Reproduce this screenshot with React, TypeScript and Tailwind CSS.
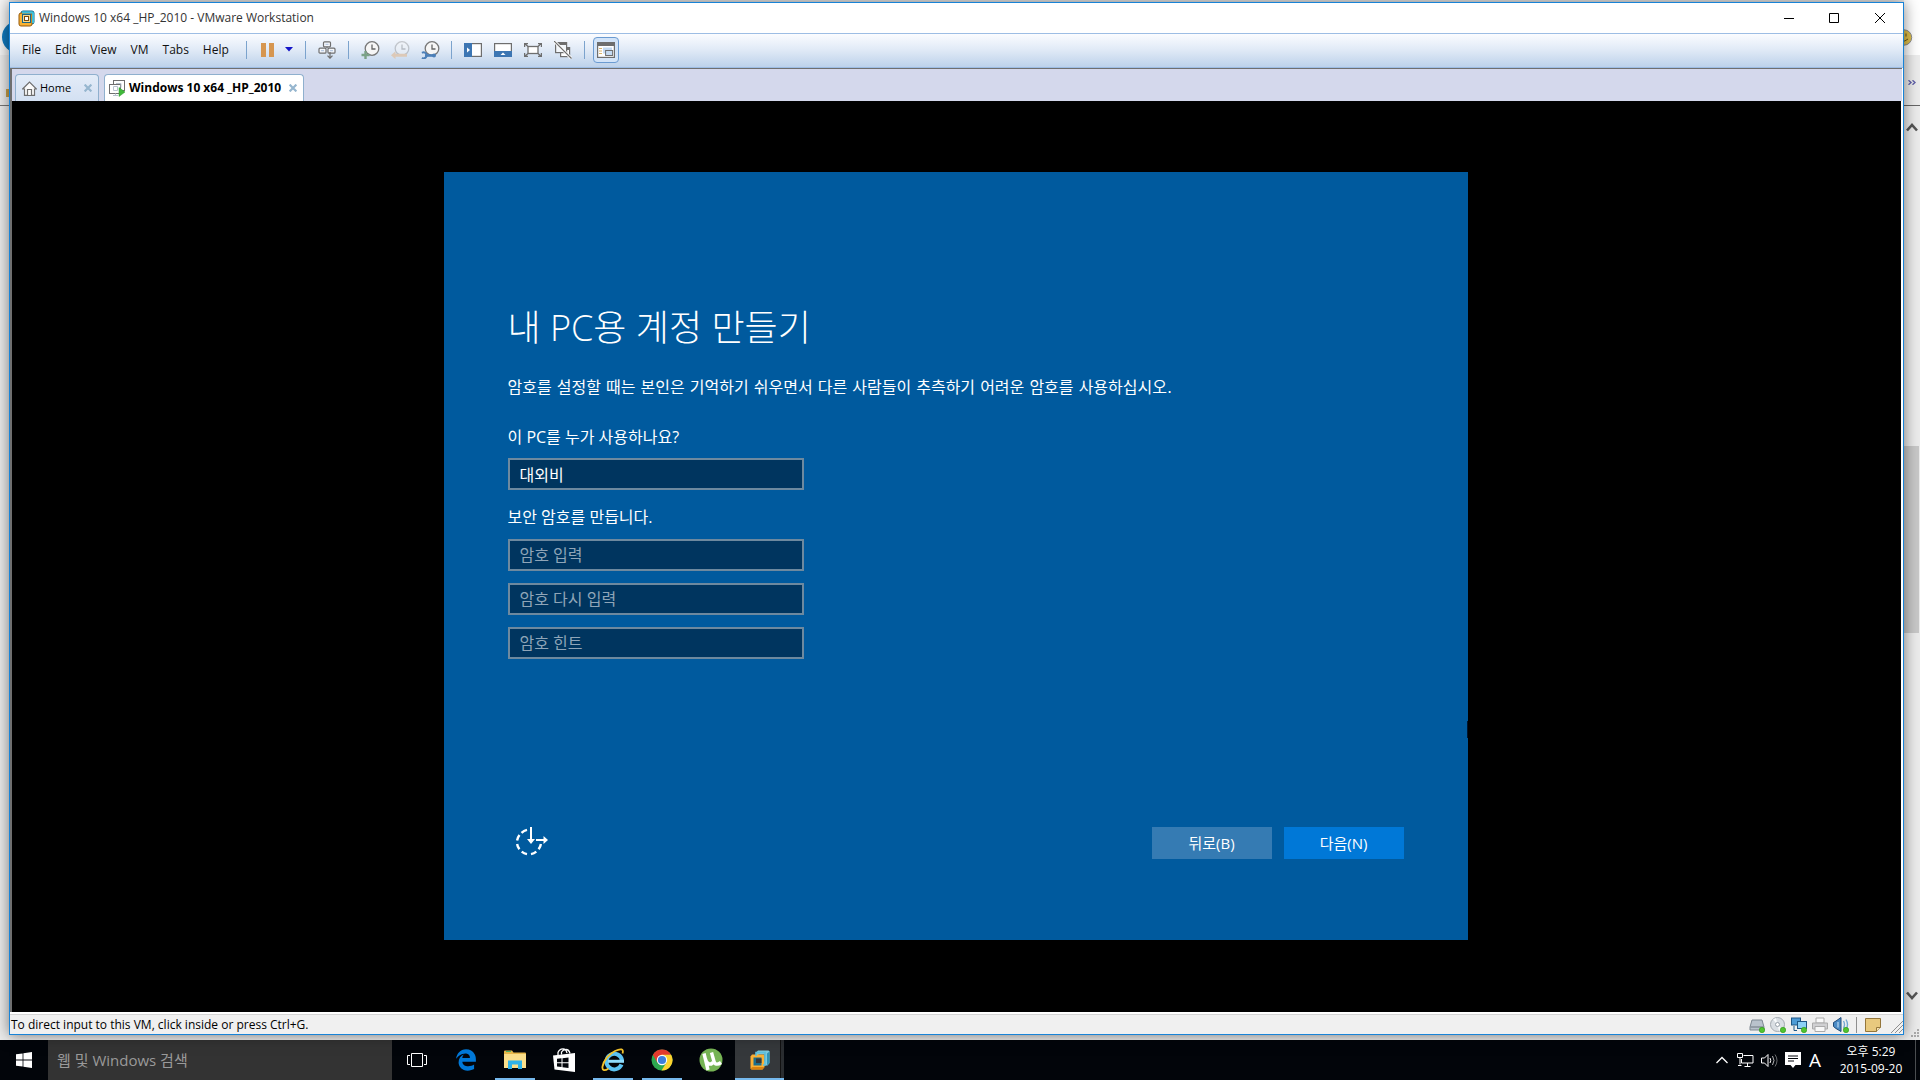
import type { ReactNode } from "react";
import { FaEdgeLegacy } from "react-icons/fa6";

const G = "#6e6e6e";

function VmLogo({ size }: { size: number }) {
  return (
    <svg width={size} height={size} viewBox="0 0 20 20" fill="none" aria-hidden="true">
      <path d="M6 2.500L8 .5h10.500l1 1V13l-2 2.500H6z" fill="#7cc9de" />
      <path d="M17 3.500l2.500-2V13l-2.500 2.500z" fill="#2f93b5" />
      <rect x="8.500" y="4.500" width="6.500" height="7" fill="#35383b" />
      <path d="M.5 6.500l1.500-2h11.500l1 1V17l-2 2.500H1.500l-1-1z" fill="#fbb034" />
      <path d="M.5 18.500l2-1.500h12l-2 2.500h-11z" fill="#d9820f" />
      <path d="M3.500 7.500h8v8h-8z" fill="#1c6f8d" />
      <path d="M6 8.500h5.500V13H6z" fill="#35383b" />
      <path d="M6 6V2.500h9V15h-2" stroke="#5cc0dc" strokeWidth="1.600" />
    </svg>
  );
}

function TitleLogo() {
  return (
    <svg width="17" height="17" viewBox="0 0 17 17" fill="none" aria-hidden="true">
      <rect x="3" y="1" width="13" height="13" rx="2" fill="#3fc0dc" stroke="#17678a" />
      <rect x="1" y="3" width="13" height="13" rx="2" fill="#f9b233" stroke="#96590a" />
      <path d="M4 2.5h9.5a1.5 1.5 0 0 1 1.5 1.5v9" stroke="#3fc0dc" strokeWidth="2" />
      <rect x="4.5" y="4.5" width="8" height="8" fill="#f9d88a" stroke="#17678a" />
      <rect x="6.5" y="6.5" width="4" height="4" fill="#fff" stroke="#7b4c10" />
    </svg>
  );
}

function Sep() {
  return <span className="h-[18px] w-px shrink-0 bg-[#7ba3cd]" />;
}

function Tool({ label, children }: { label: string; children: ReactNode }) {
  return (
    <button type="button" aria-label={label} className="flex h-6 w-[30px] shrink-0 items-center justify-center">
      {children}
    </button>
  );
}

function Clock({ faded }: { faded?: boolean }) {
  return (
    <g opacity={faded ? 0.35 : 1}>
      <circle cx="11" cy="7.5" r="6.8" fill="#f6f6f6" stroke="#777" strokeWidth="1.3" />
      <path d="M11 3.5V8h3.5" stroke="#666" strokeWidth="1.3" fill="none" />
    </g>
  );
}

function ToolBar() {
  return (
    <div className="flex h-[35px] shrink-0 items-center border-y border-[#9dbde4] bg-linear-to-b from-[#fbfcff] via-[#dfe9f6] to-[#bdd2ea] pb-0.5">
      <nav className="flex w-[232px] pl-[5px] text-[12px] leading-4 text-[#111]">
        {["File", "Edit", "View", "VM", "Tabs", "Help"].map((m) => (
          <button type="button" key={m} className="px-[7px]">
            {m}
          </button>
        ))}
      </nav>
      <span className="w-1" />
      <Sep />
      <button type="button" aria-label="Pause" className="ml-3.5 flex gap-[3px]">
        <span className="h-3.5 w-[5px] bg-[#d69650]" />
        <span className="h-3.5 w-[5px] bg-[#d69650]" />
      </button>
      <button type="button" aria-label="Power options" className="ml-[11px]">
        <svg width="8" height="5" viewBox="0 0 8 5">
          <path d="M0 0h8L4 4.6z" fill="#1414c8" />
        </svg>
      </button>
      <span className="w-3" />
      <Sep />
      <span className="w-1.5" />
      <Tool label="Send Ctrl+Alt+Del">
        <svg width="18" height="18" viewBox="0 0 18 18" fill="#f4f7fb" stroke={G} strokeWidth="1.2">
          <rect x="5.5" y=".8" width="7" height="5" rx="1" />
          <rect x="1" y="7.2" width="7" height="5" rx="1" />
          <rect x="10" y="7.2" width="7" height="5" rx="1" />
          <path d="M9 5.8v1.4M12 11v6M9.5 14.6l2.5 2.6 2.5-2.6" fill="none" />
          <path d="M7.5 3.3h3M3 9.7h3M12 9.7h3" stroke="#b9c9e2" />
        </svg>
      </Tool>
      <span className="w-1.5" />
      <Sep />
      <span className="w-1.5" />
      <Tool label="Take snapshot">
        <svg width="19" height="18" viewBox="0 0 19 18">
          <Clock />
          <path d="M4.5 10v8M.5 14h8" stroke="#7ba287" strokeWidth="2.4" />
        </svg>
      </Tool>
      <Tool label="Revert snapshot">
        <svg width="19" height="18" viewBox="0 0 19 18">
          <Clock faded />
          <path d="M0 14.200L4.500 10.200v2.600H16v3H4.500v2.400z" fill="#dcc9b8" />
        </svg>
      </Tool>
      <Tool label="Manage snapshots">
        <svg width="19" height="18" viewBox="0 0 19 18">
          <Clock />
          <path d="M4 14.500h9" stroke="#4b7fb8" strokeWidth="2.600" />
          <path d="M1 11.800a3 3 0 1 1 0 5" stroke="#4b7fb8" strokeWidth="2" fill="none" />
          <circle cx="13" cy="14.500" r="2" fill="#4b7fb8" />
        </svg>
      </Tool>
      <span className="w-1.5" />
      <Sep />
      <span className="w-1.5" />
      <Tool label="Show library">
        <svg width="18" height="14" viewBox="0 0 18 14">
          <rect x=".6" y=".6" width="16.800" height="12.800" fill="#fff" stroke={G} strokeWidth="1.200" />
          <rect width="8" height="14" fill="#3d76b3" />
          <path d="M3 4.500L6 7 3 9.500z" fill="#fff" />
        </svg>
      </Tool>
      <Tool label="Show thumbnail bar">
        <svg width="18" height="14" viewBox="0 0 18 14">
          <rect x=".6" y=".6" width="16.800" height="12.800" fill="#fff" stroke={G} strokeWidth="1.200" />
          <rect y="8" width="18" height="6" fill="#3d76b3" />
          <path d="M6.500 12L9 9.600 11.500 12z" fill="#fff" />
        </svg>
      </Tool>
      <Tool label="Full screen">
        <svg width="18" height="14" viewBox="0 0 18 14" fill="none" stroke={G} strokeWidth="1.300">
          <rect x="4" y="3.500" width="10" height="7" fill="#fff" />
          <path d="M.6 4V.6H4M14 .6h3.400V4M17.400 10v3.400H14M4 13.400H.6V10M.6.6l3.400 3M17.400.6l-3.400 3M.6 13.400l3.400-3M17.400 13.400l-3.400-3" />
        </svg>
      </Tool>
      <Tool label="Unity">
        <svg width="18" height="18" viewBox="0 0 18 18" fill="none">
          <rect x="6.600" y="6.600" width="9" height="9" fill="#fff" stroke={G} strokeWidth="1.200" />
          <path d="M6 6h10v3H6z" fill={G} />
          <rect x="1.600" y="1.600" width="11" height="10" fill="#f3f7fb" stroke={G} strokeWidth="1.200" />
          <path d="M1 1h12v3H1z" fill={G} />
          <path d="M0 0l17.500 17.500" stroke="#fff" strokeWidth="3" />
          <path d="M0 0l17.500 17.500" stroke={G} strokeWidth="1.200" />
        </svg>
      </Tool>
      <span className="w-1.5" />
      <Sep />
      <button
        type="button"
        aria-label="Console view"
        className="ml-2 flex h-[26px] w-[26px] items-center justify-center rounded-sm border border-[#6b9bd1] bg-[#d3e4f8]"
      >
        <svg width="18" height="16" viewBox="0 0 18 16">
          <rect x=".6" y=".6" width="16.800" height="14.800" fill="#fff" stroke={G} strokeWidth="1.200" />
          <path d="M0 0h18v4H0z" fill={G} />
          <path d="M2 6.500h3M2 9h3M2 11.500h3" stroke="#d9b36a" />
          <path d="M6 5.500h9v6H6z" fill="#c4daf2" />
          <rect x="8.600" y="8.500" width="7" height="5" fill="#c4daf2" stroke={G} />
        </svg>
      </button>
    </div>
  );
}

function TabClose({ label }: { label: string }) {
  return (
    <button type="button" aria-label={label} className="ml-auto">
      <svg width="8" height="8" viewBox="0 0 8 8" stroke="#96b6cf" strokeWidth="2.200">
        <path d="M.6.6l6.800 6.800M7.400.6L.6 7.400" />
      </svg>
    </button>
  );
}

function TabStrip() {
  return (
    <div className="flex h-8 shrink-0 items-end gap-[5px] bg-[#d4d8ec] pl-[3px] text-black">
      <div className="flex h-[27px] w-[84px] items-center rounded-t-sm border border-b-0 border-[#8fb0ce] bg-linear-to-b from-[#e3ecf8] to-[#d3e0f2] px-1.5">
        <svg width="15" height="15" viewBox="0 0 15 15" fill="#fbfbfb" stroke={G} strokeWidth="1.200">
          <path d="M.6 8L7.500 1l7 7H12.500v6.400h-10V8z" />
          <path d="M5.500 14V8.500h4V14" />
        </svg>
        <a href="#home" className="ml-[3px] text-[11px] leading-4">
          Home
        </a>
        <TabClose label="Close Home" />
      </div>
      <div className="flex h-[27px] w-[200px] items-center rounded-t-sm border border-b-0 border-[#8fb0ce] bg-white pr-1.5 pl-1">
        <svg width="17" height="17" viewBox="0 0 17 17" fill="none" stroke={G} className="shrink-0">
          <rect x="4.500" y=".5" width="11" height="10" fill="#fff" />
          <rect x=".5" y="4.500" width="11" height="9" fill="#fff" />
          <path d="M4 15.500h5M6.500 13.500v2M4.500 6.500h4v4h-4zM7 3.500h5v4" stroke="#b8c3cf" />
          <path d="M10 7.500l6 4.500-6 4.500z" fill="#3fb83a" stroke="#2f9a2c" strokeWidth=".5" />
        </svg>
        <a href="#vm" className="ml-[3px] text-[12px] leading-4 font-bold whitespace-nowrap">
          Windows 10 x64 _HP_2010
        </a>
        <TabClose label="Close Windows 10 x64 _HP_2010" />
      </div>
    </div>
  );
}

const field =
  "block h-8 w-[296px] border-2 border-[#6d899f] bg-[#00355f] px-2.5 text-[16px] leading-6 text-white outline-none placeholder:text-[#8fa5b8]";

function Setup() {
  return (
    <form className="relative flex h-[768px] w-[1024px] flex-col bg-[#005a9e] px-16 pt-[132px] pb-[81px] text-[16px] leading-6 text-white">
      <h1 className="text-[36px] leading-[48px] font-light">내 PC용 계정 만들기</h1>
      <p className="mt-6 font-['DejaVu_Sans','Noto_Sans_CJK_KR',sans-serif]">
        암호를 설정할 때는 본인은 기억하기 쉬우면서 다른 사람들이 추측하기 어려운 암호를 사용하십시오.
      </p>
      <label htmlFor="user" className="mt-[25px]">
        이 PC를 누가 사용하나요?
      </label>
      <input id="user" defaultValue="대외비" className={`${field} mt-[9px]`} />
      <label htmlFor="pw" className="mt-[15px]">
        보안 암호를 만듭니다.
      </label>
      <input id="pw" placeholder="암호 입력" className={`${field} mt-[10px]`} />
      <input aria-label="암호 다시 입력" placeholder="암호 다시 입력" className={`${field} mt-3`} />
      <input aria-label="암호 힌트" placeholder="암호 힌트" className={`${field} mt-3`} />
      <div className="mt-auto flex items-start">
        <button type="button" aria-label="접근성" className="ml-[7px]">
          <svg width="34" height="30" viewBox="0 0 34 30" fill="none" stroke="#fff" strokeWidth="2.400">
            <path d="M12 2.800A12 12 0 0 0 6.500 5.800M4.500 8A12 12 0 0 0 2.100 13.500M2.100 17a12 12 0 0 0 2.300 5.300M6.700 24.600a12 12 0 0 0 5.300 2.500M16 27.100a12 12 0 0 0 5.300-2.500M23.600 22.300A12 12 0 0 0 25.900 17" />
            <path d="M16 0v13M21 13h9" strokeWidth="2" />
            <path d="M12 12h8l-4 5zM28.500 9v8l4.500-4z" fill="#fff" stroke="none" />
          </svg>
        </button>
        <div className="ml-auto flex gap-3">
          <button type="button" className="h-8 w-[120px] bg-[#357bb3] text-[15px] leading-5">
            뒤로(B)
          </button>
          <button type="button" className="h-8 w-[120px] bg-[#0078d7] text-[15px] leading-5">
            다음(N)
          </button>
        </div>
      </div>
      <span className="absolute top-[549px] right-0 h-[17px] w-px bg-[#00152e]" />
    </form>
  );
}

function Dot() {
  return <circle cx="13" cy="13" r="2.700" fill="#4fc42f" stroke="#2d9417" strokeWidth=".6" />;
}

function StatusBar() {
  return (
    <footer className="flex h-5 shrink-0 items-center border-t border-[#d5d5d5] bg-[#f0f0f0] pl-px text-[12px] leading-4 text-black">
      <span>To direct input to this VM, click inside or press Ctrl+G.</span>
      <div className="ml-auto flex items-center gap-[5px]">
        <svg width="16" height="16" viewBox="0 0 16 16">
          <path d="M3 3h10l2 7v3H1v-3z" fill="#b9c2cc" stroke="#7c8791" />
          <path d="M1.500 10h13" stroke="#6d7780" />
          <Dot />
        </svg>
        <svg width="16" height="16" viewBox="0 0 16 16">
          <circle cx="7.500" cy="7.500" r="7" fill="#d9dee3" stroke="#a2a9b0" />
          <path d="M7.500 7.500L3 2.500l3-1.500zM7.500 7.500l4.500 5-3 1.500z" fill="#f9fbfc" />
          <circle cx="7.500" cy="7.500" r="2" fill="#fff" stroke="#98a1aa" />
          <Dot />
        </svg>
        <svg width="16" height="16" viewBox="0 0 16 16">
          <rect x=".5" y="1" width="9" height="7" fill="#4d9bd6" stroke="#1f5685" />
          <path d="M3 9v4.500h3" stroke="#1f5685" fill="none" />
          <rect x="6.500" y="4.500" width="9" height="7" fill="#8cd0f5" stroke="#1f5685" />
          <Dot />
        </svg>
        <svg width="16" height="16" viewBox="0 0 16 16" stroke="#aaa">
          <path d="M4 1h8v5H4z" fill="#fafafa" />
          <path d="M.5 6h15v6H.5z" fill="#d0d0d2" />
          <path d="M3 9.500h10v5H3z" fill="#f8f8f8" />
        </svg>
        <svg width="16" height="16" viewBox="0 0 16 16">
          <path d="M.5 5.500L3 4l5-3.500v14L3 11.500l-2.500-2z" fill="#4a8bc5" stroke="#204b78" />
          <path d="M5 5v5.500" stroke="#cde5f8" />
          <path d="M10.500 4q2 3.500 0 7M13 2.500q3 5 0 10" fill="none" stroke="#74a8d4" strokeWidth="1.400" />
          <Dot />
        </svg>
      </div>
      <span className="mx-[7px] h-4 w-px bg-[#8f8f8f]" />
      <svg width="16" height="14" viewBox="0 0 16 14" stroke="#94763b" className="ml-px">
        <path d="M.5.5h15v9l-4 4H.5z" fill="#e8c97e" />
        <path d="M15.500 9.500h-4v4" fill="#f6e3b2" />
      </svg>
      <svg width="12" height="12" viewBox="0 0 12 12" stroke="#8e8e8e" className="mt-1 ml-2.5">
        <path d="M0 12L12 0M4 12l8-8M8 12l4-4" />
      </svg>
    </footer>
  );
}

function VmWindow() {
  return (
    <section className="relative z-10 mt-[2px] mb-[5px] flex min-w-0 flex-1 flex-col border border-[#1883d7] bg-white shadow-[0_0_14px_rgba(0,0,0,0.5)]">
      <header className="flex h-[30px] shrink-0 items-center pl-2 text-[12px] leading-4 text-[#333]">
        <TitleLogo />
        <span className="ml-1">Windows 10 x64 _HP_2010 - VMware Workstation</span>
        <div className="ml-auto flex h-full">
          <button type="button" aria-label="Minimize" className="flex w-[45px] items-center justify-center">
            <svg width="10" height="10" viewBox="0 0 10 10" stroke="#000">
              <path d="M0 5.500h10" />
            </svg>
          </button>
          <button type="button" aria-label="Maximize" className="flex w-[46px] items-center justify-center">
            <svg width="10" height="10" viewBox="0 0 10 10" stroke="#000" fill="none">
              <path d="M.5.5h9v9h-9z" />
            </svg>
          </button>
          <button type="button" aria-label="Close" className="flex w-[46px] items-center justify-center">
            <svg width="10" height="10" viewBox="0 0 10 10" stroke="#000">
              <path d="M0 0l10 10M10 0L0 10" />
            </svg>
          </button>
        </div>
      </header>
      <ToolBar />
      <div className="mr-px flex min-h-0 flex-1 flex-col border-t border-l-2 border-[#6f6f6f]">
        <TabStrip />
        <main className="mr-px flex min-h-0 flex-1 items-center justify-center bg-black pr-0.5 pb-0.5">
          <Setup />
        </main>
      </div>
      <div className="h-0.5 shrink-0 bg-white" />
      <StatusBar />
    </section>
  );
}

function Task({ label, line, children }: { label: string; line?: boolean; children: ReactNode }) {
  return (
    <button type="button" aria-label={label} className="relative flex h-10 w-[49px] items-center justify-center">
      {children}
      {line && <span className="absolute bottom-0 h-0.5 w-10 bg-[#76b9ed]" />}
    </button>
  );
}

function Taskbar() {
  return (
    <footer className="flex h-10 shrink-0 items-center bg-[#02050a] text-white">
      <button type="button" aria-label="Start" className="flex h-10 w-12 items-center justify-center">
        <svg width="16" height="16" viewBox="0 0 16 16" fill="#fff">
          <path d="M0 2.300L6.600 1.400v6.200H0zM7.400 1.300L16 0v7.600H7.400zM0 8.400h6.600v6.200L0 13.700zM7.400 8.400H16V16l-8.600-1.200z" />
        </svg>
      </button>
      <input
        aria-label="검색"
        placeholder="웹 및 Windows 검색"
        className="h-10 w-[344px] bg-[#333] px-[9px] text-[15px] text-white outline-none placeholder:text-[#9a9a9a]"
      />
      <Task label="작업 보기">
        <svg width="20" height="14" viewBox="0 0 20 14" fill="none" stroke="#fff">
          <path d="M4.500.5h11v13h-11zM3 2.500H.5v9H3M17 2.500h2.500v9H17" />
        </svg>
      </Task>
      <Task label="Edge">
        <FaEdgeLegacy size={22} color="#0078d7" />
      </Task>
      <Task label="파일 탐색기" line>
        <svg width="22" height="20" viewBox="0 0 22 20">
          <path d="M0 2.500V1.500a1 1 0 0 1 1-1h7l1.500 2H21a1 1 0 0 1 1 1V18H0z" fill="#e8b84a" />
          <path d="M0 4h22v14H0z" fill="#fbdf8b" />
          <path d="M4 10.500h14V19h-4v-4.500H8V19H4z" fill="#2fb3ea" />
          <path d="M2 1.500h5" stroke="#4bb36b" />
        </svg>
        <span className="absolute right-1 bottom-0 h-0.5 w-2 bg-[#4f7ea5]" />
      </Task>
      <Task label="스토어">
        <svg width="22" height="24" viewBox="0 0 22 24">
          <path d="M0 7.500L22 5v19L1.500 21.500z" fill="#fff" />
          <path d="M5 7V4.500Q6 1 10 .8q3-.1 4 4.200M8.500 6.500V4Q10 1.500 13 1.500q3 0 4 4" stroke="#fff" strokeWidth="1.300" fill="none" />
          <path d="M4 10.800l4.500-.5v3.900H4zM9.500 10.200l6-.7v4.700h-6zM4 15.200h4.500v3.900L4 18.600zM9.500 15.200h6v4.700l-6-.7z" fill="#02050a" />
        </svg>
      </Task>
      <Task label="Internet Explorer" line>
        <svg width="24" height="24" viewBox="0 0 24 24" fill="none">
          <path d="M20.500 16.500A7.800 7.800 0 1 1 21 12.500" stroke="#5cc3f2" strokeWidth="4" />
          <path d="M7 13.300h16" stroke="#8fdcfb" strokeWidth="3" />
          <path d="M7.500 20.500C4 23 .8 23 1.500 18.500 2.500 12.500 8 6 14 3s9-2 7.500 2.500" stroke="#f2c22b" strokeWidth="1.800" />
        </svg>
      </Task>
      <Task label="Chrome" line>
        <svg width="22" height="22" viewBox="0 0 22 22">
          <circle cx="11" cy="11" r="10.500" fill="#2da94f" />
          <path d="M1.900 5.750A10.500 10.500 0 0 1 20.100 5.750L11 6.200l-4.500 7.600z" fill="#e33b2e" />
          <path d="M20.100 5.750A10.500 10.500 0 0 1 10.500 21.500L15.500 13.600 11 5.750z" fill="#fdd32f" />
          <circle cx="11" cy="11" r="5.200" fill="#fff" />
          <circle cx="11" cy="11" r="4.100" fill="#3d7edb" />
        </svg>
      </Task>
      <Task label="uTorrent">
        <svg width="24" height="24" viewBox="0 0 24 24" fill="none">
          <circle cx="12" cy="12" r="11.500" fill="#76b454" />
          <path d="M5 5.500L9 22M6.500 11c1 5.500 6 6.500 7.500 3M12.500 4.500l2.500 9c.8 3 3.500 3.500 7 1" stroke="#fff" strokeWidth="3.400" />
        </svg>
      </Task>
      <button
        type="button"
        aria-label="VMware Workstation"
        className="relative flex h-10 w-[49px] items-center justify-center bg-[#35383b]"
      >
        <VmLogo size={20} />
        <span className="absolute top-0 right-0 h-10 w-1 border-l border-[#111] bg-[#2a2d30]" />
        <span className="absolute bottom-0 left-0 h-0.5 w-[49px] bg-[#76b9ed]" />
      </button>

      <div className="ml-auto flex items-center">
        <button type="button" aria-label="숨겨진 아이콘" className="mr-[9px]">
          <svg width="12" height="8" viewBox="0 0 12 8" fill="none" stroke="#fff" strokeWidth="1.300">
            <path d="M.5 7L6 1.500 11.500 7" />
          </svg>
        </button>
        <svg width="17" height="14" viewBox="0 0 17 14" fill="none" stroke="#fff" className="mr-[7px]">
          <path d="M6.500 2.500h9.500v7.500H4.500V6M.5.500h5v4h-5zM3 4.500v7M1 12.500h3.500M10.500 10v3M7.500 13.500h6" />
        </svg>
        <svg width="17" height="15" viewBox="0 0 17 15" fill="none" stroke="#fff" className="mr-[7px]">
          <path d="M.5 5h3l3.500-3.500v12L3.500 10h-3z" />
          <path d="M9 5q1.500 2.500 0 5" />
          <path d="M11.500 3q3 4.500 0 9" opacity=".7" />
          <path d="M14 1.500q4 6 0 12" opacity=".4" />
        </svg>
        <svg width="16" height="16" viewBox="0 0 16 16" className="mr-2">
          <path d="M0 0h16v13h-5.500L8 16l-2.500-3H0z" fill="#fff" />
          <path d="M3 4h10M3 6.500h10M3 9h6" stroke="#02050a" />
        </svg>
        <span className="w-3 text-[19px] leading-6">A</span>
        <div className="ml-3 w-[76px] text-center text-[12px] leading-[17px]">
          <div>오후 5:29</div>
          <div>2015-09-20</div>
        </div>
        <span className="ml-1.5 h-10 w-px bg-[#4a4d50]" />
        <span className="w-1" />
      </div>
    </footer>
  );
}

export default function App() {
  return (
    <div className="flex h-screen flex-col overflow-hidden bg-[#ececec] font-['Open_Sans','Noto_Sans_CJK_KR',sans-serif]">
      <div className="flex min-h-0 flex-1">
        <div className="flex w-[9px] shrink-0 flex-col overflow-hidden">
          <div className="flex h-[55px] items-end bg-[#f6f6f6]">
            <span className="mb-0.5 ml-0.5 h-8 w-8 shrink-0 rounded-full bg-[#1079bd]" />
          </div>
          <div className="flex h-[51px] items-end border-b border-[#777] pb-2 pl-1.5">
            <span className="h-2 w-1 bg-[#c9a14a]" />
          </div>
        </div>
        <VmWindow />
        <aside className="flex w-4 shrink-0 flex-col overflow-hidden">
          <div className="flex h-[55px] items-end bg-white pb-[9px]">
            <svg width="16" height="17" viewBox="0 0 16 17" className="shrink-0">
              <circle cx="0" cy="8.500" r="7.700" fill="#e0c04a" stroke="#8c8c8c" />
              <path d="M2 4.500v3M-3 11q4 2.500 7-1" stroke="#6b5417" fill="none" />
            </svg>
          </div>
          <div className="flex h-[51px] items-center justify-center border-b border-[#666] pt-1">
            <svg width="8" height="5" viewBox="0 0 8 5" fill="none" stroke="#5f5fa8" strokeWidth="1.400">
              <path d="M.5.3L3 2.500.5 4.700M4.500.3L7 2.500 4.500 4.700" />
            </svg>
          </div>
          <div className="flex min-h-0 flex-1 flex-col items-center pt-[17px]">
            <svg width="12" height="9" viewBox="0 0 12 9" fill="none" stroke="#555" strokeWidth="2.600">
              <path d="M1 7.500L6 2l5 5.500" />
            </svg>
            <div className="mt-[314px] h-[187px] w-[15px] self-start bg-[#c8c8c8]" />
            <svg width="12" height="9" viewBox="0 0 12 9" fill="none" stroke="#555" strokeWidth="2.600" className="mt-auto">
              <path d="M1 1.500L6 7l5-5.500" />
            </svg>
            <svg width="9" height="9" viewBox="0 0 9 9" fill="#aaa" className="mt-[29px] mb-0.5 self-end">
              <path d="M6 0h2v2H6zM3 3h2v2H3zM6 3h2v2H6zM0 6h2v2H0zM3 6h2v2H3zM6 6h2v2H6z" />
            </svg>
          </div>
        </aside>
      </div>
      <Taskbar />
    </div>
  );
}
